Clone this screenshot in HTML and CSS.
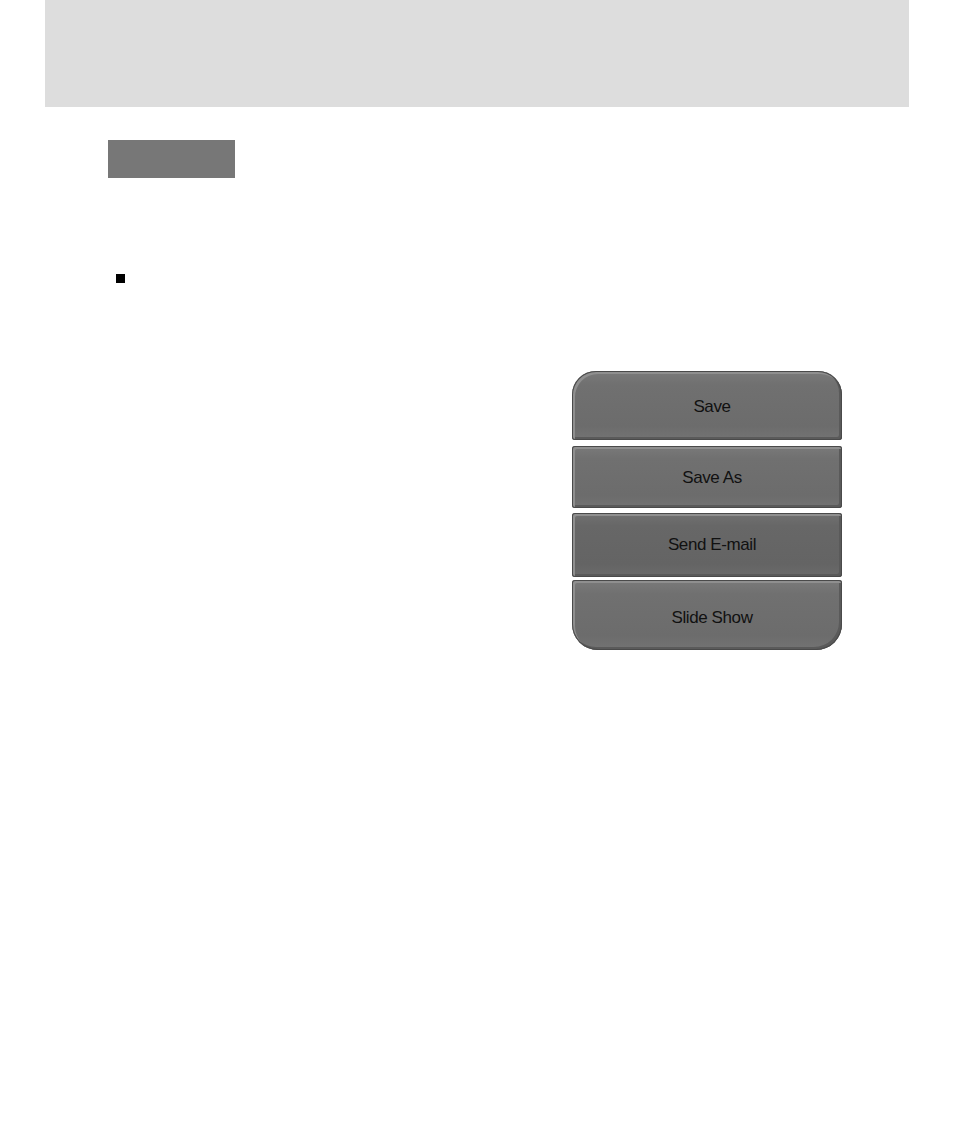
FILE: index.html
```html
<!DOCTYPE html>
<html>
<head>
<meta charset="utf-8">
<link rel="stylesheet" href="styles.css">
</head>
<body>
<div class="header"></div>
<div class="content">
  <div class="tag"></div>
  <div class="bullet"></div>
  <div class="menu">
    <div class="btn first">Save</div>
    <div class="btn second">Save As</div>
    <div class="btn third">Send E-mail</div>
    <div class="btn last">Slide Show</div>
  </div>
</div>
</body>
</html>
```
FILE: styles.css
```css
html, body { margin: 0; padding: 0; background: #fff; }
body { width: 954px; height: 1145px; font-family: "Liberation Sans", Arial, sans-serif; }
.header { margin-left: 45px; width: 864px; height: 107px; background: #dddddd; }
.content { position: relative; padding-left: 108px; padding-top: 33px; }
.tag { width: 127px; height: 38px; background: #777777; }
.bullet { width: 9px; height: 9px; background: #000; margin-left: 8px; margin-top: 96px; }
.menu { margin-left: 464px; margin-top: 88px; width: 270px; display: flex; flex-direction: column; }
.btn {
  display: flex; align-items: center; justify-content: center;
  padding-left: 10px; box-sizing: border-box;
  color: #111; font-size: 17px; letter-spacing: -0.4px;
  background: linear-gradient(180deg, #7a7a7a 0%, #707070 20%, #6c6c6c 80%, #737373 100%);
  box-shadow: inset 0 0 0 1px #4a4a4a, inset 2px 2px 0 1px #8f8f8f, inset -2px -2px 0 1px #5a5a5a;
  border-radius: 3px;
}
.first { height: 69px; border-radius: 24px 24px 3px 3px; padding-top: 2px; }
.second { height: 62px; margin-top: 6px; padding-top: 2px; }
.third { height: 64px; margin-top: 5px; background: linear-gradient(180deg, #717171 0%, #676767 20%, #646464 80%, #6b6b6b 100%); }
.last { height: 70px; margin-top: 3px; border-radius: 3px 3px 26px 26px; padding-top: 6px; }
```
